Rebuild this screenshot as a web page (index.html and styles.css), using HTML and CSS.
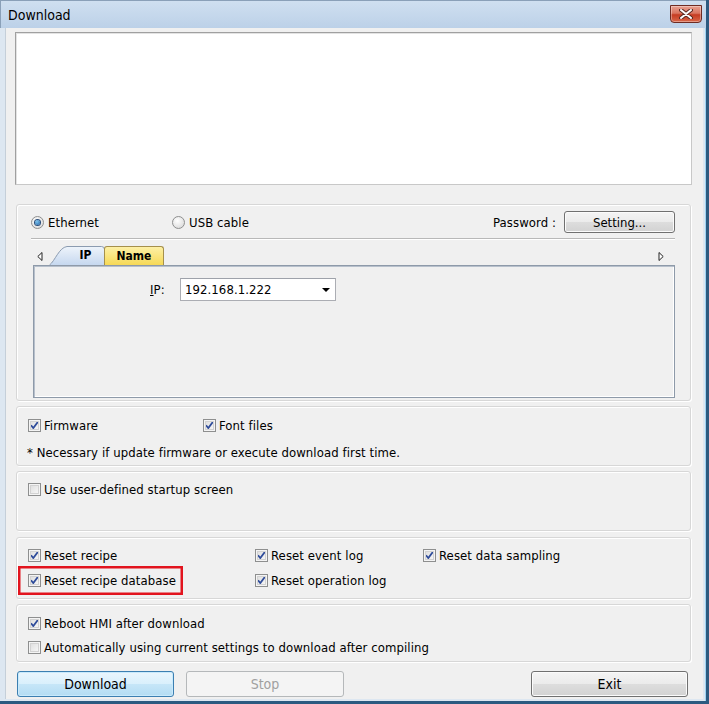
FILE: index.html
```html
<!DOCTYPE html>
<html lang="en">
<head>
<meta charset="utf-8">
<title>Download</title>
<link rel="stylesheet" href="styles.css">
</head>
<body>
<div class="window">
  <div class="titlebar">
    <span class="title">Download</span>
    <button class="close" type="button" aria-label="Close">
      <svg width="14" height="10" viewBox="0 0 14 10"><path d="M2 1 L12 9 M12 1 L2 9" stroke="#5a2a22" stroke-width="4" stroke-linecap="round"/><path d="M2 1 L12 9 M12 1 L2 9" stroke="#ffffff" stroke-width="2" stroke-linecap="round"/></svg>
    </button>
  </div>

  <div class="client">
    <div class="log"></div>

    <section class="group g-conn">
      <div class="conn-row">
        <label class="radio eth"><span class="rd on"></span>Ethernet</label>
        <label class="radio"><span class="rd"></span>USB cable</label>
        <span class="pw">Password :</span>
        <button class="btn setting" type="button">Setting...</button>
      </div>
      <div class="sep"></div>
      <div class="tabstrip">
        <svg class="arrow" width="6" height="9" viewBox="0 0 6 9"><path d="M5 0.5 L0.8 4.5 L5 8.5 Z" fill="#fff" stroke="#222" stroke-width="1"/></svg>
        <div class="tab tab-ip">
          <svg class="tab-bg" width="56" height="19" viewBox="0 0 56 19">
            <defs><linearGradient id="gip" x1="0" y1="0" x2="0" y2="1"><stop offset="0" stop-color="#eef4fb"/><stop offset="1" stop-color="#c6d8ef"/></linearGradient></defs>
            <path d="M0.5 19 C 6 15, 10 1.5, 18 0.5 L 52.5 0.5 Q 55.5 0.5 55.5 3.5 L 55.5 19" fill="url(#gip)" stroke="#8b9bb0"/>
          </svg>
          <span class="tab-label">IP</span>
        </div>
        <div class="tab tab-name">
          <span class="tab-label">Name</span>
        </div>
        <span class="spacer"></span>
        <svg class="arrow" width="6" height="9" viewBox="0 0 6 9"><path d="M1 0.5 L5.2 4.5 L1 8.5 Z" fill="#fff" stroke="#222" stroke-width="1"/></svg>
      </div>
      <div class="tabpage">
        <div class="ip-row">
          <span class="ip-label"><u>I</u>P:</span>
          <div class="combo">
            <span>192.168.1.222</span>
            <svg width="8" height="4" viewBox="0 0 8 4"><path d="M0 0 H8 L4 4 Z" fill="#000"/></svg>
          </div>
        </div>
      </div>
    </section>

    <section class="group g-fw">
      <div class="row">
        <label class="check w175"><span class="cb on"></span>Firmware</label>
        <label class="check"><span class="cb on"></span>Font files</label>
      </div>
      <p class="note">* Necessary if update firmware or execute download first time.</p>
    </section>

    <section class="group g-startup">
      <div class="row">
        <label class="check"><span class="cb"></span>Use user-defined startup screen</label>
      </div>
    </section>

    <section class="group g-reset">
      <div class="row">
        <label class="check w227"><span class="cb on"></span>Reset recipe</label>
        <label class="check w168"><span class="cb on"></span>Reset event log</label>
        <label class="check"><span class="cb on"></span>Reset data sampling</label>
      </div>
      <div class="row">
        <label class="check w227"><span class="hl"><span class="cb on"></span>Reset recipe database</span></label>
        <label class="check"><span class="cb on"></span>Reset operation log</label>
      </div>
    </section>

    <section class="group g-after">
      <div class="row">
        <label class="check"><span class="cb on"></span>Reboot HMI after download</label>
      </div>
      <div class="row">
        <label class="check"><span class="cb"></span>Automatically using current settings to download after compiling</label>
      </div>
    </section>

    <div class="actions">
      <button class="btn default" type="button">Download</button>
      <button class="btn disabled" type="button">Stop</button>
      <span class="spacer"></span>
      <button class="btn" type="button">Exit</button>
    </div>
  </div>
</div>
</body>
</html>
```

FILE: styles.css
```css
* { box-sizing: border-box; }

html, body {
  margin: 0;
  padding: 0;
  background: #f0f0f0;
}

body {
  font-family: "DejaVu Sans Condensed", "DejaVu Sans", sans-serif;
  font-size: 13px;
  letter-spacing: 0.08px;
  color: #000;
}

/* window frame */
.window {
  width: 709px;
  height: 704px;
  background: #dde7f1;
  border-right: 3px solid #2c5a80;
  border-bottom: 3px solid #2c5a80;
  box-shadow: inset -1px 0 0 #9fd3f2;
  display: flex;
  flex-direction: column;
}

.titlebar {
  height: 28px;
  flex: none;
  display: flex;
  align-items: flex-start;
  background: linear-gradient(#cfdff0, #bcd1e8);
  border-top: 1px solid #8aa0b8;
  border-left: 1px solid #8aa0b8;
}

.title {
  padding: 6px 0 0 7px;
  font-size: 14px;
  letter-spacing: 0;
  flex: 1;
}

.close {
  margin: 4px 4px 0 0;
  width: 32px;
  height: 18px;
  padding: 0;
  border: 1px solid #6e2b22;
  border-radius: 0 0 4px 4px;
  background: linear-gradient(#e8a090 0%, #da7560 45%, #c63c22 55%, #d8674a 100%);
  box-shadow: inset 0 0 0 1px rgba(255,255,255,0.35);
  display: flex;
  align-items: center;
  justify-content: center;
}

.client {
  flex: 1;
  margin: 0 3px 2px 5px;
  background: #f0f0f0;
  border-left: 1px solid #c5cfd9;
  padding: 4px 0 0 9px;
  display: flex;
  flex-direction: column;
}

.log {
  width: 677px;
  height: 153px;
  background: #fff;
  border: 1px solid #a0a0a0;
  border-right-color: #c8c8c8;
  border-bottom-color: #c8c8c8;
  box-shadow: inset 1px 1px 0 #e3e3e3;
}

/* group boxes */
.group {
  width: 675px;
  margin: 5px 0 0 1px;
  border: 1px solid #d7d7d7;
  border-radius: 3px;
  box-shadow: inset 1px 1px 0 #fff, 1px 1px 0 #fff;
  padding: 0 13px 0 11px;
}

.g-conn { margin-top: 19px; height: 197px; padding: 4px 15px 0 14px; }
.g-fw { height: 60px; padding-top: 8px; }
.g-startup { height: 60px; padding-top: 7px; }
.g-reset { height: 62px; padding-top: 7px; margin-top: 6px; }
.g-after { height: 58px; padding-top: 8px; }

.row {
  display: flex;
  align-items: center;
  height: 20px;
}
.g-reset .row + .row { margin-top: 5px; }
.g-after .row + .row { margin-top: 4px; }

.check, .radio {
  display: flex;
  align-items: center;
  white-space: nowrap;
}
.w175 { width: 175px; }
.w227 { width: 227px; }
.w168 { width: 168px; }

.cb {
  width: 13px;
  height: 13px;
  flex: none;
  margin-right: 3px;
  border: 1px solid #8e8f8f;
  background: linear-gradient(135deg, #dadada, #fbfbfb);
  box-shadow: inset 0 0 0 1px #f4f4f4, inset 0 0 0 2px #d2d2d2;
}
.cb.on {
  background:
    url("data:image/svg+xml,%3Csvg xmlns='http://www.w3.org/2000/svg' width='11' height='11'%3E%3Cpath d='M2 5.2 L4.3 8 L9 1.8' stroke='%232f4c9a' stroke-width='1.8' fill='none'/%3E%3C/svg%3E") center / 11px 11px no-repeat,
    linear-gradient(135deg, #dadada, #fbfbfb);
}

.hl {
  display: flex;
  align-items: center;
  margin-left: -10px;
  padding: 0 5px 0 8px;
  height: 29px;
  margin-top: 1px;
  border: 2px solid #e2141e;
  box-shadow: inset 0 0 0 0.5px #e2141e;
}

.note {
  margin: 8px 0 0 -1px;
  height: 20px;
  line-height: 20px;
}

/* connection group */
.conn-row {
  display: flex;
  align-items: center;
  height: 26px;
}
.eth { width: 141px; }
.rd {
  width: 13px;
  height: 13px;
  flex: none;
  border-radius: 50%;
  border: 1px solid #8e8f8f;
  background: radial-gradient(circle at 40% 35%, #ffffff, #d4d4d4);
  margin-right: 4px;
  display: flex;
  align-items: center;
  justify-content: center;
}
.rd.on::before {
  content: "";
  width: 5px;
  height: 5px;
  border-radius: 50%;
  background: radial-gradient(circle at 40% 35%, #7cc4ef, #1b5fa3);
  box-shadow: 0 0 0 1px #2a4d7a;
}
.pw {
  margin-left: auto;
  margin-right: 8px;
}

.btn {
  font: inherit;
  font-size: 14px;
  letter-spacing: 0;
  color: #000;
  height: 26px;
  width: 157px;
  padding: 0;
  border: 1px solid #707070;
  border-radius: 3px;
  background: linear-gradient(#f4f4f4 0%, #ebebeb 50%, #dddddd 51%, #d2d2d2 100%);
  box-shadow: inset 0 0 0 1px #fbfbfb;
}
.btn.setting { width: 111px; height: 22px; font-size: 13px; }
.btn.default {
  border-color: #3c7fb1;
  background: linear-gradient(#eaf6fd 0%, #d9f0fc 50%, #c6e6f8 51%, #b3dcf3 100%);
  box-shadow: inset 0 0 0 1px #c9eafc;
}
.btn.disabled {
  width: 158px;
  margin-left: 12px;
  color: #a0a0a0;
  border-color: #b5b8ba;
  background: #f4f4f4;
  box-shadow: none;
}

.sep {
  margin-top: 3px;
  height: 2px;
  border-top: 1px solid #b8b8b8;
  border-bottom: 1px solid #ffffff;
}

.tabstrip {
  margin-top: 6px;
  height: 19px;
  display: flex;
  align-items: flex-end;
}
.tabstrip .arrow { align-self: center; margin: 1px 0 0 6px; }
.tabstrip .arrow:last-child { margin: 1px 11px 0 0; }
.spacer { flex: 1; }

.tab {
  height: 19px;
  display: grid;
  font-weight: bold;
  font-size: 12px;
  letter-spacing: 0;
}
.tab-ip { width: 56px; margin-left: 6px; }
.tab-ip .tab-bg, .tab-ip .tab-label { grid-area: 1 / 1; }
.tab-ip .tab-label { padding-left: 17px; text-align: center; line-height: 19px; }
.tab-name {
  width: 60px;
  margin-left: -1px;
  border: 1px solid #a5904c;
  border-bottom: none;
  border-radius: 3px 3px 0 0;
  background: linear-gradient(#fdf0a6, #f6d957);
  text-align: center;
  line-height: 18px;
}

.tabpage {
  margin: 0 0 0 2px;
  height: 133px;
  border: 1px solid #8e9aa9;
  box-shadow: inset 1px 1px 0 #b7c0cc, inset -1px -1px 0 #fff;
  padding: 12px 0 0 116px;
}

.ip-row {
  display: flex;
  align-items: center;
}
.ip-label { width: 30px; }
.combo {
  width: 156px;
  height: 23px;
  background: #fff;
  border: 1px solid #abadb3;
  border-top-color: #9ea2aa;
  display: flex;
  align-items: center;
  padding: 0 5px 0 4px;
  justify-content: space-between;
}

.actions {
  margin: 9px 0 0 2px;
  width: 671px;
  display: flex;
}
```
